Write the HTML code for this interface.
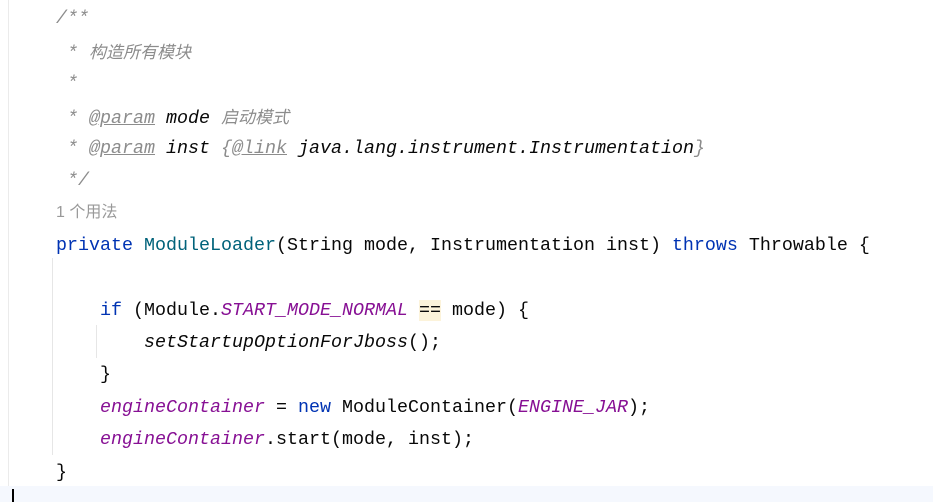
<!DOCTYPE html>
<html><head><meta charset="utf-8"><style>
body{margin:0;width:933px;height:502px;background:#fff;position:relative;overflow:hidden;font-family:"Liberation Mono","Noto Sans CJK SC",monospace;font-size:18.33px;color:#080808}
.l{position:absolute;left:56px;height:32.4px;line-height:32.4px;white-space:pre;margin-top:3px}
.c{color:#8c8c8c;font-style:italic}
.u{text-decoration:underline;text-decoration-color:#8c8c8c}
.d{color:#080808;font-style:italic}
.k{color:#0033b3}
.t{color:#00627a}
.p{color:#871094;font-style:italic}
.i{font-style:italic}
.cj{font-family:"Noto Sans CJK SC",sans-serif;font-size:17px}
.hint{color:#999;font-family:"Liberation Sans","Noto Sans CJK SC",sans-serif;font-size:16px}
.hl{background:#fcf3da}
</style></head><body>
<div style="position:absolute;left:8px;top:0;width:1px;height:502px;background:#ebebeb"></div>
<div style="position:absolute;left:0;top:486px;width:933px;height:16px;background:#f5f8fe"></div>
<div style="position:absolute;left:12px;top:489px;width:2px;height:13px;background:#000"></div>
<div style="position:absolute;left:52px;top:258px;width:1px;height:197px;background:#e6e6e6"></div>
<div style="position:absolute;left:96px;top:325px;width:1px;height:33px;background:#e6e6e6"></div>
<div class="l c" style="top:0">/**</div>
<div class="l c" style="top:32.4px"> * <span class="cj">构造所有模块</span></div>
<div class="l c" style="top:64.8px"> *</div>
<div class="l c" style="top:97.2px"> * <span class="u">@param</span> <span class="d">mode</span> <span class="cj">启动模式</span></div>
<div class="l c" style="top:129.6px"> * <span class="u">@param</span> <span class="d">inst</span> {<span class="u">@link</span> <span class="d">java.lang.instrument.Instrumentation</span>}</div>
<div class="l c" style="top:162px"> */</div>
<div class="l hint" style="top:194.4px">1 个用法</div>
<div class="l" style="top:226.8px"><span class="k">private</span> <span class="t">ModuleLoader</span>(String mode, Instrumentation inst) <span class="k">throws</span> Throwable {</div>
<div class="l" style="top:291.6px">    <span class="k">if</span> (Module.<span class="p">START_MODE_NORMAL</span> <span class="hl">==</span> mode) {</div>
<div class="l" style="top:324px">        <span class="i">setStartupOptionForJboss</span>();</div>
<div class="l" style="top:356.4px">    }</div>
<div class="l" style="top:388.8px">    <span class="p">engineContainer</span> = <span class="k">new</span> ModuleContainer(<span class="p">ENGINE_JAR</span>);</div>
<div class="l" style="top:421.2px">    <span class="p">engineContainer</span>.start(mode, inst);</div>
<div class="l" style="top:453.6px">}</div>
</body></html>
